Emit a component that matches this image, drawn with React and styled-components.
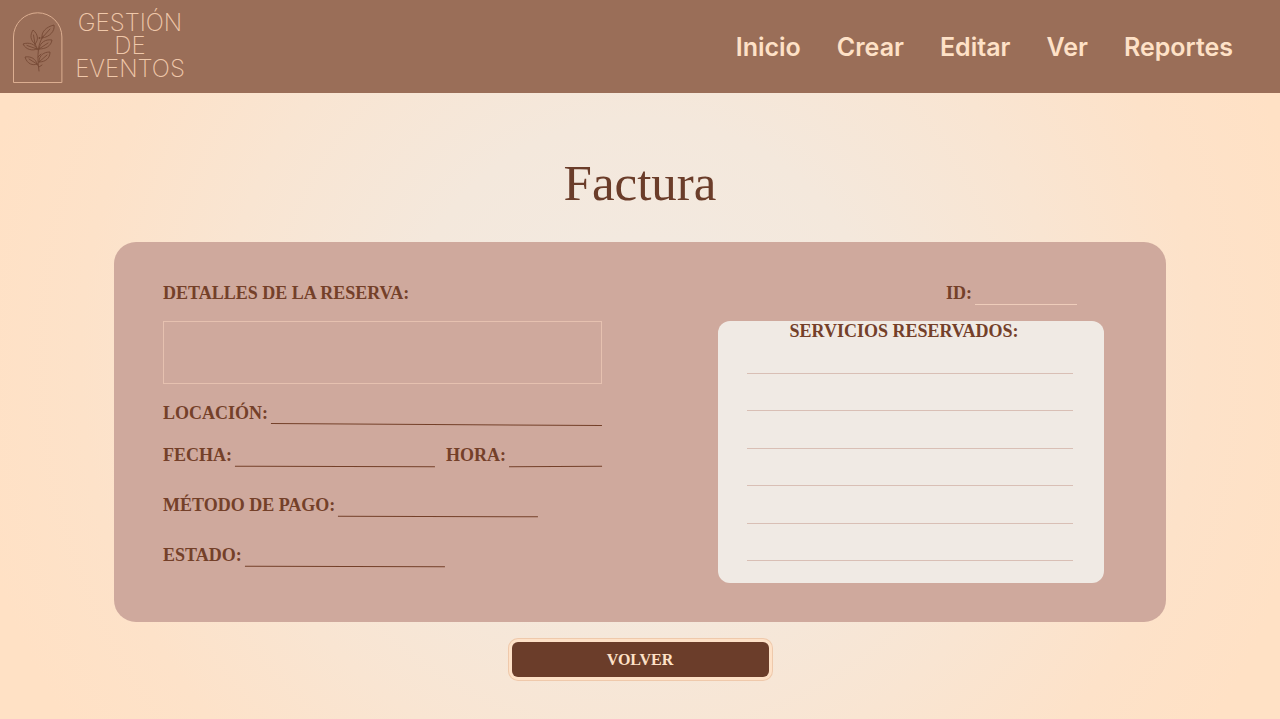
import React from "react";
import styled, { createGlobalStyle } from "styled-components";

const color = {
  bar: "#9a6e58",
  cream: "#fee1c7",
  cocoa: "#6b3d2a",
  label: "#744029",
  rose: "#cfa99d",
  paper: "#f0eae4",
  blush: "#e6c1b0",
};
const serif = '"Liberation Serif", "Times New Roman", serif';

const GlobalStyle = createGlobalStyle`
  *, *::before, *::after { box-sizing: border-box; }
  body { margin: 0; }
`;

const Page = styled.div`
  min-height: 100vh;
  display: flex;
  flex-direction: column;
  font-family: ${serif};
  color: ${color.label};
  background: radial-gradient(circle at 50% 50%, #f2eae2 0, #f4e8dc 240px, #f9e5d2 420px, #fde2c9 560px, #ffe1c5 680px);
`;

const Header = styled.header`
  display: flex;
  align-items: center;
  justify-content: space-between;
  min-height: 93px;
  padding: 0 47px 0 12px;
  background: ${color.bar};
`;

const Brand = styled.a`
  display: flex;
  align-items: center;
  gap: 8px;
  color: #f0c8aa;
  text-decoration: none;
`;

const BrandName = styled.span`
  width: 116px;
  font: 200 24px/23px Inter, "Open Sans", sans-serif;
  text-align: center;
  padding-bottom: 2px;
`;

const Nav = styled.nav`
  display: flex;
  align-items: center;
  gap: 36px;
`;

const NavLink = styled.a`
  font: 600 25px/32px Inter, "Open Sans", sans-serif;
  color: ${color.cream};
  text-decoration: none;
`;

const Main = styled.main`
  display: flex;
  flex-direction: column;
  padding: 60px 114px 38px;
`;

const Title = styled.h1`
  margin: 0 0 29px;
  font-size: 51px;
  line-height: 60px;
  font-weight: 400;
  text-align: center;
  color: ${color.cocoa};
`;

const Invoice = styled.form`
  display: grid;
  grid-template-columns: minmax(0, 439fr) minmax(0, 386fr);
  column-gap: 116px;
  row-gap: 15px;
  padding: 38px 62px 39px 49px;
  border-radius: 22px;
  background: ${color.rose};
`;

const Label = styled.label`
  font-size: 18px;
  line-height: 26px;
  font-weight: 700;
  white-space: nowrap;
`;

const Field = styled.div`
  display: flex;
  align-items: flex-end;
  gap: 3px;
  min-width: 0;
  flex: ${(p) => (p.$grow ? "1" : "none")};
`;

const LineInput = styled.input`
  width: ${(p) => (p.$width ? `${p.$width}px` : "auto")};
  flex: ${(p) => (p.$width ? "none" : "1")};
  min-width: 0;
  height: 24px;
  margin: 0 0 1px;
  padding: 0 4px;
  border: 0;
  border-bottom: 1px solid ${(p) => p.$line || color.label};
  border-radius: 0;
  outline: 0;
  background: transparent;
  font: 16px/20px ${serif};
  color: ${color.label};
  transform: rotate(${(p) => p.$tilt || 0}deg);
`;

const IdField = styled(Field)`
  justify-content: flex-end;
  padding-right: 27px;
`;

const Details = styled.div`
  display: flex;
  flex-direction: column;
  gap: 24px;
`;

const FieldGroup = styled.div`
  display: flex;
  flex-direction: column;
  gap: 16px;
`;

const FieldRow = styled.div`
  display: flex;
  gap: 11px;
`;

const DetailsBox = styled.textarea`
  display: block;
  width: 100%;
  height: 63px;
  padding: 6px 8px;
  border: 1px solid ${color.blush};
  border-radius: 0;
  outline: 0;
  resize: none;
  background: transparent;
  font: 16px/20px ${serif};
  color: ${color.label};
`;

const Services = styled.section`
  display: flex;
  flex-direction: column;
  min-height: 262px;
  padding: 0 31px 22px 29px;
  border-radius: 12px;
  background: ${color.paper};
`;

const ServicesTitle = styled.h2`
  margin: 0 0 9px;
  padding-right: 12px;
  font-size: 18px;
  line-height: 20px;
  font-weight: 700;
  text-align: center;
`;

const ServiceList = styled.div`
  flex: 1;
  display: flex;
  flex-direction: column;
  justify-content: space-between;
`;

const ServiceInput = styled(LineInput)`
  width: 100%;
  flex: none;
  margin: 0;
`;

const BackButton = styled.button`
  align-self: center;
  width: 257px;
  height: 35px;
  margin-top: 20px;
  padding: 0;
  border: 0;
  border-radius: 6px;
  background: ${color.cocoa};
  box-shadow: 0 0 0 3px ${color.cream}, 0 0 0 4px #efc9ab;
  color: ${color.cream};
  font: 700 16px/20px ${serif};
  cursor: pointer;
`;

const links = ["Inicio", "Crear", "Editar", "Ver", "Reportes"];

function Emblem() {
  return (
    <svg width="52" height="74" viewBox="0 0 52 74" fill="none" aria-hidden="true">
      <path d="M1.5 72.5V27a24.200 24.200 0 0 1 48.400 0V72.500Z" stroke="#dcae91" />
      <g stroke="#764a36" strokeWidth=".9" strokeLinecap="round" strokeLinejoin="round">
        <path d="M27 61C26 54 25.500 46 26.500 39C27 34 29 30 31 26" />
        <path d="M30 28C29 22 34 17 42 15C43 21 38 27 30 28ZM30 28L38 19" />
        <path d="M23 34C18 30 18 25 21 20C26 24 27 30 23 34ZM23 34L21.500 25" />
        <path d="M27 39C28 32 34 29 40 30C39 36 34 39 27 39ZM27 39L36 33" />
        <path d="M25 39C21 41 14 40 11 34C17 32 23 34 25 39ZM25 39L15 35.500" />
        <path d="M27 52C27 45 32 42 38 42C38 48 34 52 27 52ZM27 52L35 45" />
        <path d="M25 54C21 56 15 54 13 47C19 46 24 49 25 54ZM25 54L17 49" />
        <path d="M23 34L26 40M25 54L27 57L30 55M26 47L29 44" />
      </g>
      <circle cx="27.500" cy="28" r="1" fill="#764a36" />
    </svg>
  );
}

function TextField({ id, label, width, grow, tilt }) {
  return (
    <Field $grow={grow}>
      <Label htmlFor={id}>{label}</Label>
      <LineInput id={id} $width={width} $tilt={tilt} />
    </Field>
  );
}

export default function App() {
  return (
    <Page>
      <GlobalStyle />
      <Header>
        <Brand href="#inicio">
          <Emblem />
          <BrandName>GESTIÓN DE EVENTOS</BrandName>
        </Brand>
        <Nav>
          {links.map((name) => (
            <NavLink key={name} href={`#${name.toLowerCase()}`}>{name}</NavLink>
          ))}
        </Nav>
      </Header>
      <Main>
        <Title>Factura</Title>
        <Invoice id="factura" onSubmit={(e) => e.preventDefault()}>
          <Label htmlFor="detalles">DETALLES DE LA RESERVA:</Label>
          <IdField>
            <Label htmlFor="reserva-id">ID:</Label>
            <LineInput id="reserva-id" $width={102} $line="#efcdbb" />
          </IdField>
          <Details>
            <FieldGroup>
              <DetailsBox id="detalles" />
              <TextField id="locacion" label="LOCACIÓN:" grow tilt={0.35} />
              <FieldRow>
                <TextField id="fecha" label="FECHA:" width={200} tilt={0.2} />
                <TextField id="hora" label="HORA:" grow tilt={-0.3} />
              </FieldRow>
            </FieldGroup>
            <TextField id="metodo" label="MÉTODO DE PAGO:" width={200} tilt={0.2} />
            <TextField id="estado" label="ESTADO:" width={200} tilt={0.2} />
          </Details>
          <Services>
            <ServicesTitle>SERVICIOS RESERVADOS:</ServicesTitle>
            <ServiceList>
              {[1, 2, 3, 4, 5, 6].map((n) => (
                <ServiceInput key={n} aria-label={`Servicio ${n}`} $line="#d9bfb5" />
              ))}
            </ServiceList>
          </Services>
        </Invoice>
        <BackButton type="button">VOLVER</BackButton>
      </Main>
    </Page>
  );
}
